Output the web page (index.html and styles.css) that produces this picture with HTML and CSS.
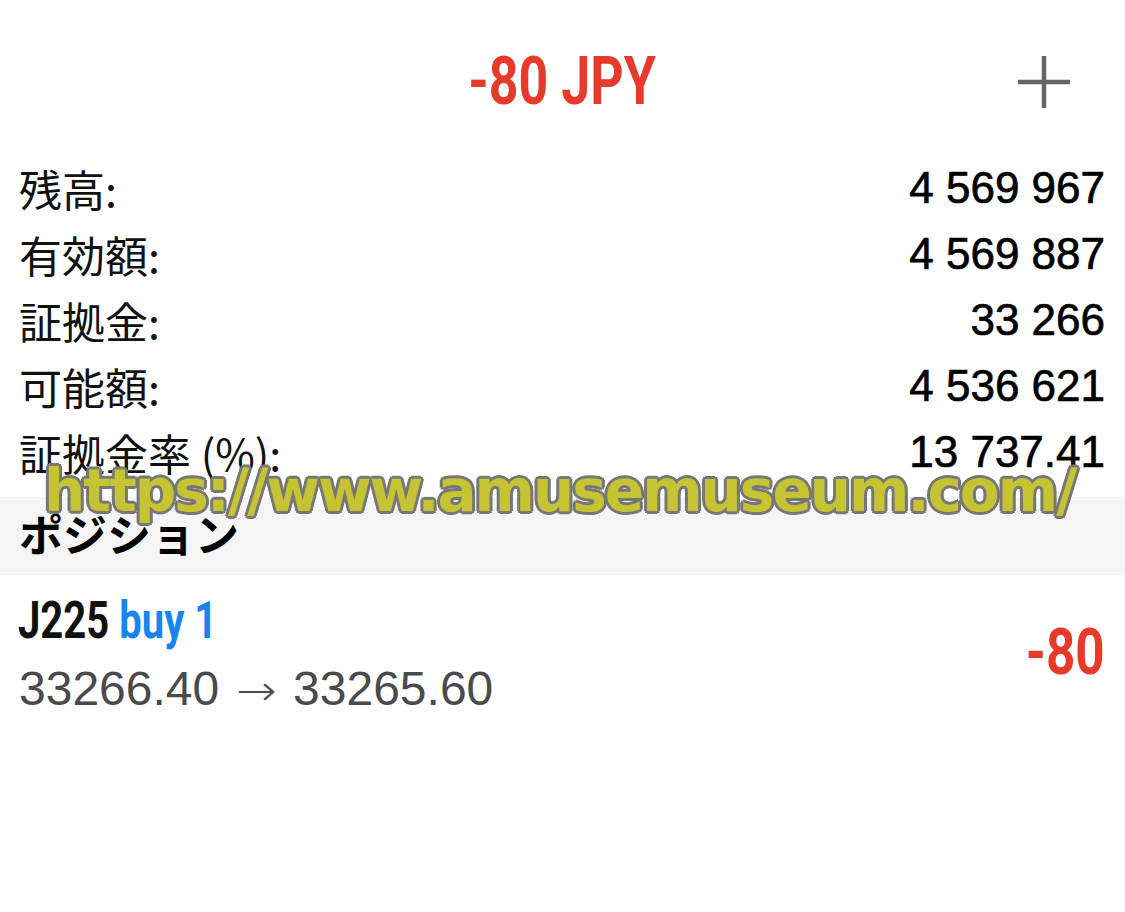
FILE: index.html
```html
<!DOCTYPE html>
<html lang="ja">
<head>
<meta charset="utf-8">
<link rel="stylesheet" href="styles.css">
</head>
<body>
<div class="screen">
  <header class="top">
    <div class="title"><span class="cond">-80 JPY</span></div>
    <svg class="plus" width="56" height="56" viewBox="0 0 56 56"><path d="M28 2V54M2 28H54" stroke="#666" stroke-width="4.5" fill="none"/></svg>
  </header>
  <section class="summary">
    <div class="row"><span class="label">残高:</span><span class="value">4 569 967</span></div>
    <div class="row"><span class="label">有効額:</span><span class="value">4 569 887</span></div>
    <div class="row"><span class="label">証拠金:</span><span class="value">33 266</span></div>
    <div class="row"><span class="label">可能額:</span><span class="value">4 536 621</span></div>
    <div class="row"><span class="label">証拠金率 (%):</span><span class="value">13 737.41</span></div>
  </section>
  <div class="band"><span class="band-title">ポジション</span></div>
  <div class="position">
    <div class="pos-left">
      <div class="pos-name"><span class="cond"><span class="sym">J225</span> <span class="side">buy 1</span></span></div>
      <div class="pos-prices">33266.40 <span class="arrow">→</span> 33265.60</div>
    </div>
    <div class="pos-profit"><span class="cond">-80</span></div>
  </div>
  <div class="watermark">https://www.amusemuseum.com/</div>
</div>
</body>
</html>
```
FILE: styles.css
```css
html, body {
  margin: 0;
  padding: 0;
  background: #fff;
}
.screen {
  position: relative;
  width: 1125px;
  height: 912px;
  overflow: hidden;
  font-family: "Liberation Sans", "Noto Sans CJK JP", sans-serif;
  color: #000;
}
.top {
  position: relative;
  height: 155px;
  display: flex;
  justify-content: center;
}
.title {
  margin-top: 42px;
  height: 78px;
  line-height: 78px;
  font-family: Roboto, "Liberation Sans", sans-serif;
  font-weight: 700;
  font-size: 67px;
  color: #e63b2a;
}
.cond {
  display: inline-block;
  transform: scaleX(0.775);
  white-space: pre;
}
.title .cond { transform-origin: center; }
.plus {
  position: absolute;
  left: 1016px;
  top: 54px;
}
.summary {
  display: flex;
  flex-direction: column;
}
.row {
  height: 66px;
  display: flex;
  align-items: center;
  justify-content: space-between;
  padding: 0 20px 0 19px;
}
.label {
  font-family: "Noto Sans CJK JP", sans-serif;
  font-size: 43px;
  line-height: 66px;
  color: #111;
}
.value {
  font-size: 44px;
  line-height: 66px;
  -webkit-text-stroke: 0.7px #000;
}
.band {
  margin-top: 12px;
  height: 78px;
  background: #f5f5f5;
  display: flex;
  align-items: center;
  padding: 0 19px;
}
.band-title {
  font-family: "Noto Sans CJK JP", sans-serif;
  font-weight: 700;
  font-size: 44px;
  margin-top: -6px;
}
.position {
  display: flex;
  justify-content: space-between;
  align-items: center;
  padding: 12px 20px 0 18px;
}
.pos-name {
  height: 68px;
  line-height: 68px;
  font-family: Roboto, "Liberation Sans", sans-serif;
  font-weight: 700;
  font-size: 52px;
}
.pos-name .cond { transform-origin: left center; transform: scaleX(0.77); }
.sym { color: #111; }
.side { color: #1a84ee; }
.pos-prices {
  height: 68px;
  line-height: 68px;
  font-size: 48px;
  color: #4a4a4d;
  padding-left: 1px;
  white-space: nowrap;
}
.arrow {
  display: inline-block;
  font-family: "DejaVu Sans", sans-serif;
  font-size: 42px;
  font-weight: 300;
  transform: scaleX(1.15);
  margin: 0 6px;
}
.pos-profit {
  font-family: Roboto, "Liberation Sans", sans-serif;
  font-weight: 700;
  font-size: 64px;
  color: #e63b2a;
  margin-top: -6px;
}
.pos-profit .cond { transform-origin: right center; transform: scaleX(0.8); }
.watermark {
  position: absolute;
  left: 44px;
  top: 455px;
  font-family: "DejaVu Sans", sans-serif;
  font-weight: 700;
  font-size: 58px;
  letter-spacing: -2px;
  line-height: 72px;
  color: #c7c434;
  white-space: nowrap;
  text-shadow:
    3px 0 0 #777, -3px 0 0 #777, 0 3px 0 #777, 0 -3px 0 #777,
    2px 2px 0 #777, -2px 2px 0 #777, 2px -2px 0 #777, -2px -2px 0 #777;
}
```
